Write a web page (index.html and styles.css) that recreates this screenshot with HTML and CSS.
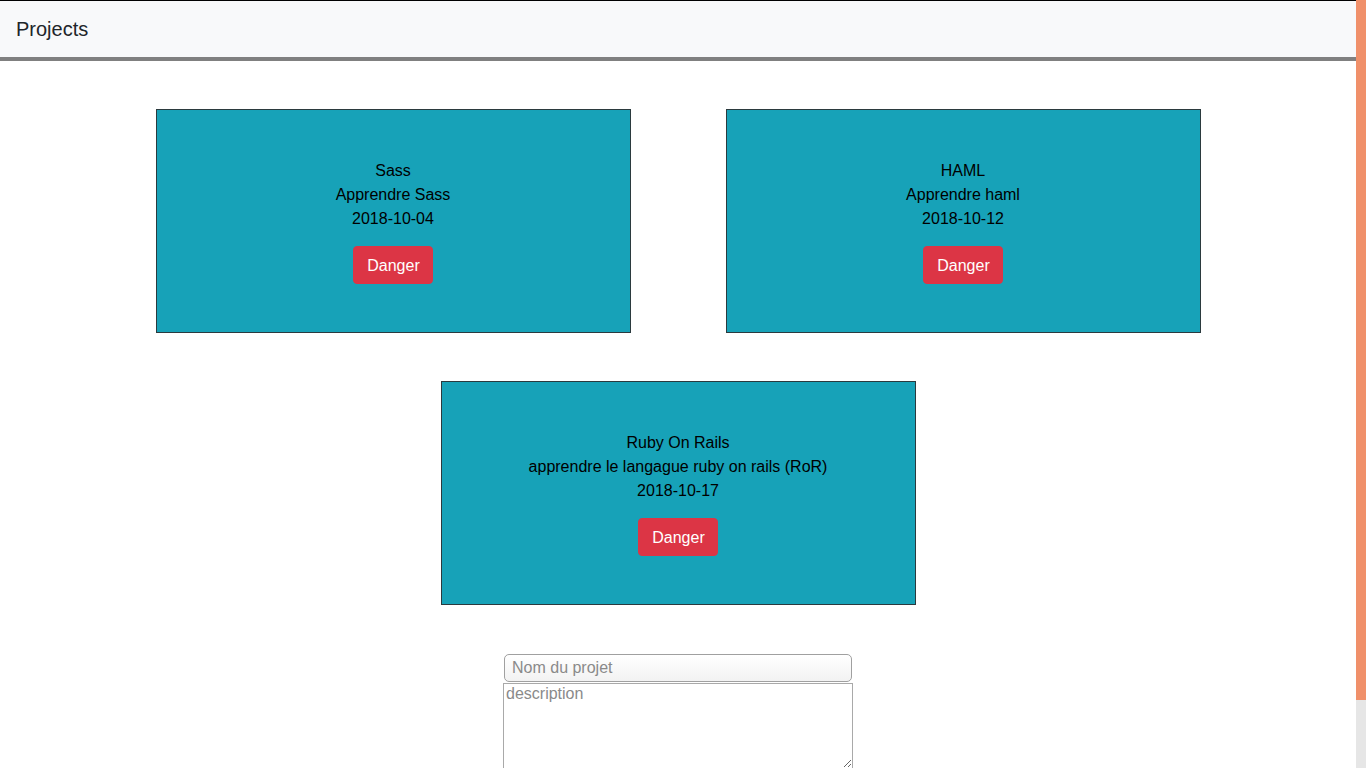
FILE: index.html
```html
<!DOCTYPE html>
<html lang="fr">
<head>
<meta charset="utf-8">
<title>Projects</title>
<link rel="stylesheet" href="styles.css">
</head>
<body>
<nav class="navbar">
  <span class="brand">Projects</span>
</nav>
<main class="projects">
  <div class="card">
    <div class="info">
      <div class="title">Sass</div>
      <div class="desc">Apprendre Sass</div>
      <div class="date">2018-10-04</div>
    </div>
    <button class="btn-danger">Danger</button>
  </div>
  <div class="card">
    <div class="info">
      <div class="title">HAML</div>
      <div class="desc">Apprendre haml</div>
      <div class="date">2018-10-12</div>
    </div>
    <button class="btn-danger">Danger</button>
  </div>
  <div class="card">
    <div class="info">
      <div class="title">Ruby On Rails</div>
      <div class="desc">apprendre le langague ruby on rails (RoR)</div>
      <div class="date">2018-10-17</div>
    </div>
    <button class="btn-danger">Danger</button>
  </div>
</main>
<form class="new-project">
  <input class="name" type="text" placeholder="Nom du projet">
  <textarea class="description" placeholder="description"></textarea>
</form>
<div class="scrollbar" aria-hidden="true"><div class="scroll-thumb"></div></div>
</body>
</html>
```
FILE: styles.css
```css
body {
  margin: 0 10px 0 0;
  font-family: "Liberation Sans", Arial, sans-serif;
  font-size: 16px;
  line-height: 24px;
  color: #000;
  padding-bottom: 72px;
}
.scrollbar {
  position: fixed;
  top: 0;
  right: 0;
  width: 10px;
  height: 100vh;
  background: #e6e6e6;
}
.scroll-thumb {
  height: 700px;
  background: #f0906a;
}
.navbar {
  height: 56px;
  background: #f8f9fa;
  border-top: 1px solid #000;
  border-bottom: 4px solid #808080;
  display: flex;
  align-items: center;
  padding: 0 16px;
}
.brand {
  font-size: 20px;
  color: #212529;
  padding-bottom: 1px;
}
.projects {
  max-width: 1045px;
  margin: 48px auto 0;
  display: flex;
  flex-wrap: wrap;
  justify-content: center;
  gap: 48px 95px;
}
.card {
  box-sizing: border-box;
  width: 475px;
  height: 224px;
  background: #17a2b8;
  border: 1px solid #2b3a3e;
  display: flex;
  flex-direction: column;
  align-items: center;
  justify-content: center;
  text-align: center;
}
.info {
  padding-top: 1px;
}
.btn-danger {
  margin-top: 15px;
  font-family: inherit;
  font-size: 16px;
  line-height: 24px;
  padding: 7px 12px 5px 13px;
  color: #fff;
  background: #dc3545;
  border: 1px solid #dc3545;
  border-radius: 4px;
}
.new-project {
  margin-top: 49px;
  display: flex;
  flex-direction: column;
  align-items: center;
}
.name {
  box-sizing: border-box;
  width: 348px;
  height: 28px;
  margin: 0;
  padding: 0 7px;
  font-family: inherit;
  font-size: 16px;
  border: 1px solid #a0a0a0;
  border-radius: 5px;
  background: linear-gradient(#ffffff, #f2f2f2);
  color: #000;
}
.name::placeholder,
.description::placeholder {
  color: #8a8a8a;
}
.description {
  box-sizing: border-box;
  width: 350px;
  height: 86px;
  margin: 1px 0 0;
  padding: 0 2px;
  font-family: inherit;
  font-size: 16px;
  line-height: 19px;
  border: 1px solid #a9a9a9;
}
```
